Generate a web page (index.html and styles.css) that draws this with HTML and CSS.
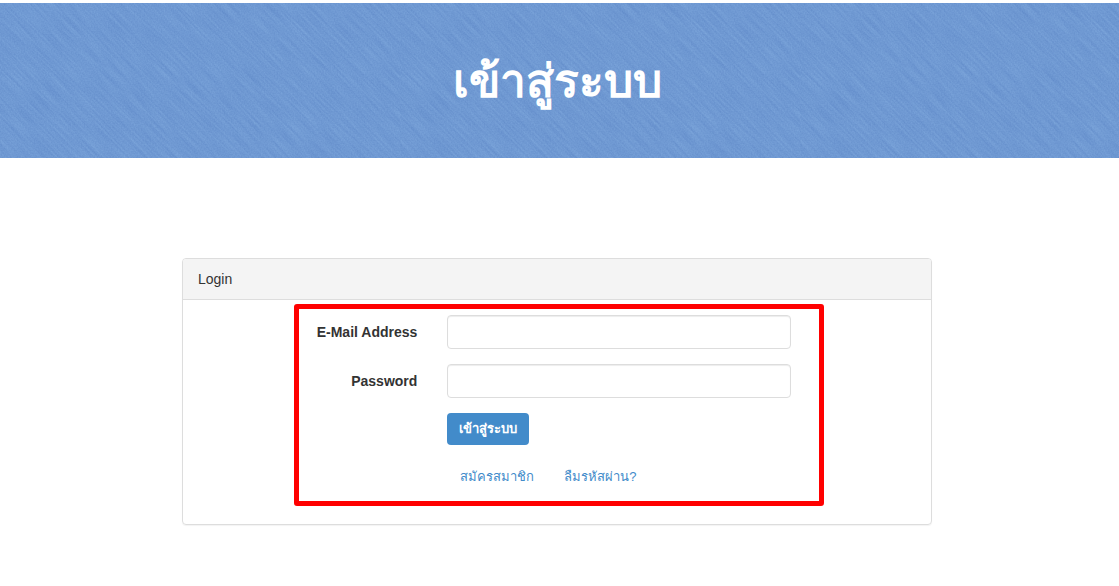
FILE: index.html
```html
<!DOCTYPE html>
<html lang="th">
<head>
<meta charset="utf-8">
<meta name="viewport" content="width=device-width, initial-scale=1">
<title>เข้าสู่ระบบ</title>
<link rel="stylesheet" href="styles.css">
</head>
<body>
<header class="banner">
  <svg class="banner-texture" aria-hidden="true">
    <defs>
      <filter id="strokes" x="0" y="0" width="100%" height="100%" color-interpolation-filters="sRGB">
        <feTurbulence type="fractalNoise" baseFrequency="0.03 0.6" numOctaves="1" seed="4"/>
        <feColorMatrix values="0.16 0 0 0 0.355  0.16 0 0 0 0.52  0.1 0 0 0 0.775  0 0 0 0 1"/>
      </filter>
      <filter id="grain" x="0" y="0" width="100%" height="100%" color-interpolation-filters="sRGB">
        <feTurbulence type="fractalNoise" baseFrequency="0.7" numOctaves="1" seed="9"/>
        <feColorMatrix values="0.2 0 0 0 0.34  0.2 0 0 0 0.5  0.15 0 0 0 0.75  0 0 0 0 0.4"/>
      </filter>
      <pattern id="weave" width="400" height="400" patternUnits="userSpaceOnUse">
        <rect x="-300" y="-300" width="1000" height="1000" transform="rotate(45 200 200)" filter="url(#strokes)"/>
        <rect width="400" height="400" filter="url(#grain)"/>
      </pattern>
    </defs>
    <rect width="100%" height="100%" fill="url(#weave)"/>
  </svg>
  <h1 class="banner-title">เข้าสู่ระบบ</h1>
</header>
<main class="container">
  <section class="panel">
    <h2 class="panel-heading">Login</h2>
    <form class="login-form">
      <div class="form-row">
        <label class="form-label" for="email">E-Mail Address</label>
        <div class="form-field"><input class="form-control" id="email" type="email" name="email"></div>
      </div>
      <div class="form-row">
        <label class="form-label" for="password">Password</label>
        <div class="form-field"><input class="form-control" id="password" type="password" name="password"></div>
      </div>
      <div class="form-row">
        <div class="form-actions">
          <button class="button" type="submit">เข้าสู่ระบบ</button>
          <div class="links">
            <a class="link" href="#register">สมัครสมาชิก</a>
            <a class="link" href="#forgot">ลืมรหัสผ่าน?</a>
          </div>
        </div>
      </div>
    </form>
    <div class="highlight" aria-hidden="true"></div>
  </section>
</main>
</body>
</html>
```
FILE: styles.css
```css
* {
  box-sizing: border-box;
}

body {
  margin: 0;
  padding-top: 3px;
  background: #fff;
  color: #333;
  font: 14px/20px "Liberation Sans", Arial, sans-serif;
}

.banner {
  display: grid;
  place-items: center;
  background: #7099d3;
}

.banner-texture,
.banner-title {
  grid-area: 1 / 1;
}

.banner-texture {
  width: 100%;
  height: 100%;
  min-height: 0;
  contain: size;
}

.banner-title {
  z-index: 1;
  margin: 0;
  padding: 50px 21px 49px 16px;
  color: #fff;
  font-size: 46px;
  font-weight: 700;
  line-height: 56px;
}

.container {
  padding: 100px 21px 60px 16px;
}

.panel {
  position: relative;
  max-width: 750px;
  margin: 0 auto;
  border: 1px solid #ddd;
  border-radius: 4px;
  box-shadow: 0 1px 1px rgba(0, 0, 0, 0.05);
}

.panel-heading {
  margin: 0;
  padding: 10px 15px;
  border-bottom: 1px solid #ddd;
  border-radius: 3px 3px 0 0;
  background: #f4f4f4;
  font-size: 14px;
  font-weight: 400;
}

.login-form {
  display: grid;
  gap: 15px;
  padding: 15px 0 31px;
}

.form-row {
  display: grid;
  grid-template-columns: 4fr 6fr 2fr;
}

.form-label {
  padding: 7px 15px;
  font-weight: 700;
  text-align: right;
}

.form-field {
  padding: 0 15px;
}

.form-control {
  display: block;
  width: 100%;
  height: 34px;
  padding: 6px 12px;
  border: 1px solid #ddd;
  border-radius: 4px;
  background: #fff;
  box-shadow: inset 0 1px 1px rgba(0, 0, 0, 0.075);
  color: #555;
  font: inherit;
}

.form-actions {
  grid-column: 2;
  padding: 0 15px;
}

.button {
  display: block;
  height: 32px;
  padding: 0 12px;
  border: 0;
  border-radius: 4px;
  background: #428bca;
  color: #fff;
  font: inherit;
  font-size: 13px;
  font-weight: 700;
}

.links {
  display: flex;
  gap: 30px;
  padding: 22px 13px 6px;
  font-size: 13px;
}

.link {
  color: #428bca;
  text-decoration: none;
}

.highlight {
  position: absolute;
  inset: 45px 107px 18px 111px;
  border: 5px solid #f00;
  border-radius: 3px;
  pointer-events: none;
}
```
